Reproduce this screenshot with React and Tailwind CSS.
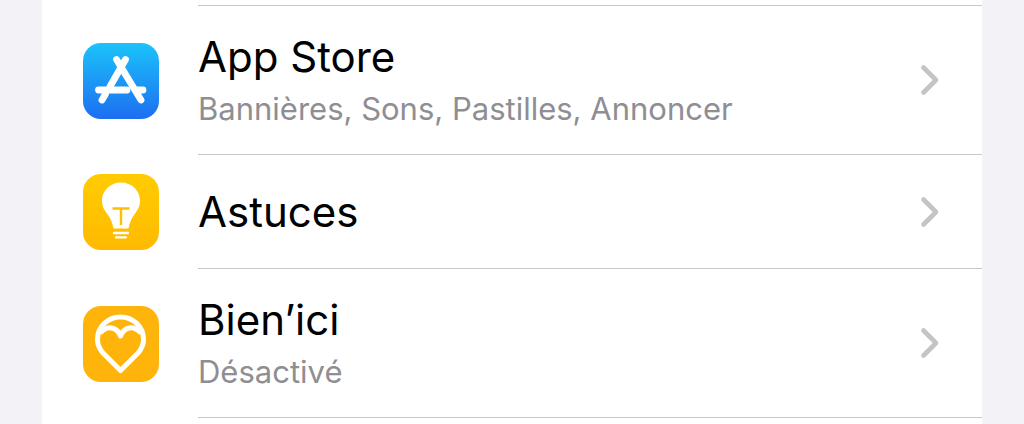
import { useId } from "react";

function AppStoreIcon() {
  const id = useId();
  return (
    <svg viewBox="0 0 76 76" className="h-[76px] w-[76px] shrink-0">
      <defs>
        <linearGradient id={id} x1="0" y1="0" x2="0" y2="1">
          <stop offset="0" stopColor="#1bc3fb" />
          <stop offset="1" stopColor="#1d6ef1" />
        </linearGradient>
      </defs>
      <rect width="76" height="76" rx="18" fill={`url(#${id})`} />
      <g stroke="#fff" strokeWidth="6.800" strokeLinecap="round" fill="none">
        <path d="M33.500 16.500 L58 57" />
        <path d="M42.500 16.500 L27 43.500" />
        <path d="M19 57 L22.500 51" />
        <path d="M15.500 47 H44" />
        <path d="M54 47 H60" />
      </g>
    </svg>
  );
}

function TipsIcon() {
  const id = useId();
  return (
    <svg viewBox="0 0 76 76" className="h-[76px] w-[76px] shrink-0">
      <defs>
        <linearGradient id={id} x1="0" y1="0" x2="0" y2="1">
          <stop offset="0" stopColor="#ffcc00" />
          <stop offset="1" stopColor="#ffba00" />
        </linearGradient>
      </defs>
      <rect width="76" height="76" rx="18" fill={`url(#${id})`} />
      <path
        d="M38 8.500 C27.500 8.500 19 16.500 19 26.500 C19 33 22 37 25 41 C27.500 44.500 29.500 49 30.500 54.500 H45.500 C46.500 49 48.500 44.500 51 41 C54 37 57 33 57 26.500 C57 16.500 48.500 8.500 38 8.500 Z"
        fill="#fff"
      />
      <path d="M29.500 34.500 H46.500 M38 34.500 V51" stroke="#ffc000" strokeWidth="2.400" fill="none" />
      <path d="M31 59 H45" stroke="#fff" strokeWidth="2.400" strokeLinecap="round" />
      <path d="M33 63.300 H43" stroke="#fff" strokeWidth="2.200" strokeLinecap="round" />
    </svg>
  );
}

function BienIciIcon() {
  return (
    <svg viewBox="0 0 76 76" className="h-[76px] w-[76px] shrink-0">
      <rect width="76" height="76" rx="18" fill="#ffb40b" />
      <g stroke="#fff" strokeWidth="5" fill="none" strokeLinejoin="round">
        <path d="M37.500 64.500 L20 47 C16.500 43 14.500 38.500 14.500 33.500 C14.500 20.500 25 11 37.500 11 C50 11 60.500 20.500 60.500 33.500 C60.500 38.500 58.500 43 55 47 Z" />
        <path d="M17 27 C21 22.500 25.500 21 29 22 C33 23 36 26 37.500 30 C39 26 42 23 46 22 C49.500 21 54 22.500 58 27" />
      </g>
    </svg>
  );
}

function Chevron() {
  return (
    <svg viewBox="0 0 20 32" className="h-8 w-5 shrink-0">
      <path
        d="M3.500 3.500 L16 16 L3.500 28.500"
        stroke="#c4c4c7"
        strokeWidth="4.600"
        strokeLinecap="round"
        strokeLinejoin="round"
        fill="none"
      />
    </svg>
  );
}

function Row({ icon, title, subtitle, height }) {
  return (
    <div className={`flex items-center pl-[41px] ${height}`}>
      {icon}
      <div className="ml-[39px] flex h-full min-w-0 flex-1 items-center justify-between border-b border-[#c8c8cc] pr-[42px]">
        <div>
          <p className="text-[42px] leading-[48px] text-black">{title}</p>
          {subtitle ? <p className="mt-[10px] text-[31px] leading-[36px] text-[#8e8e93]">{subtitle}</p> : null}
        </div>
        <Chevron />
      </div>
    </div>
  );
}

export default function App() {
  return (
    <div className="h-[424px] overflow-hidden bg-[#f2f2f7] px-[42px] font-['Inter',sans-serif]">
      <div className="h-full bg-white">
        <div className="ml-[156px] h-[6px] border-b border-[#c8c8cc]" />
        <Row icon={<AppStoreIcon />} title="App Store" subtitle="Bannières, Sons, Pastilles, Annoncer" height="h-[149px]" />
        <Row icon={<TipsIcon />} title="Astuces" height="h-[114px]" />
        <Row icon={<BienIciIcon />} title="Bien’ici" subtitle="Désactivé" height="h-[149px]" />
      </div>
    </div>
  );
}
